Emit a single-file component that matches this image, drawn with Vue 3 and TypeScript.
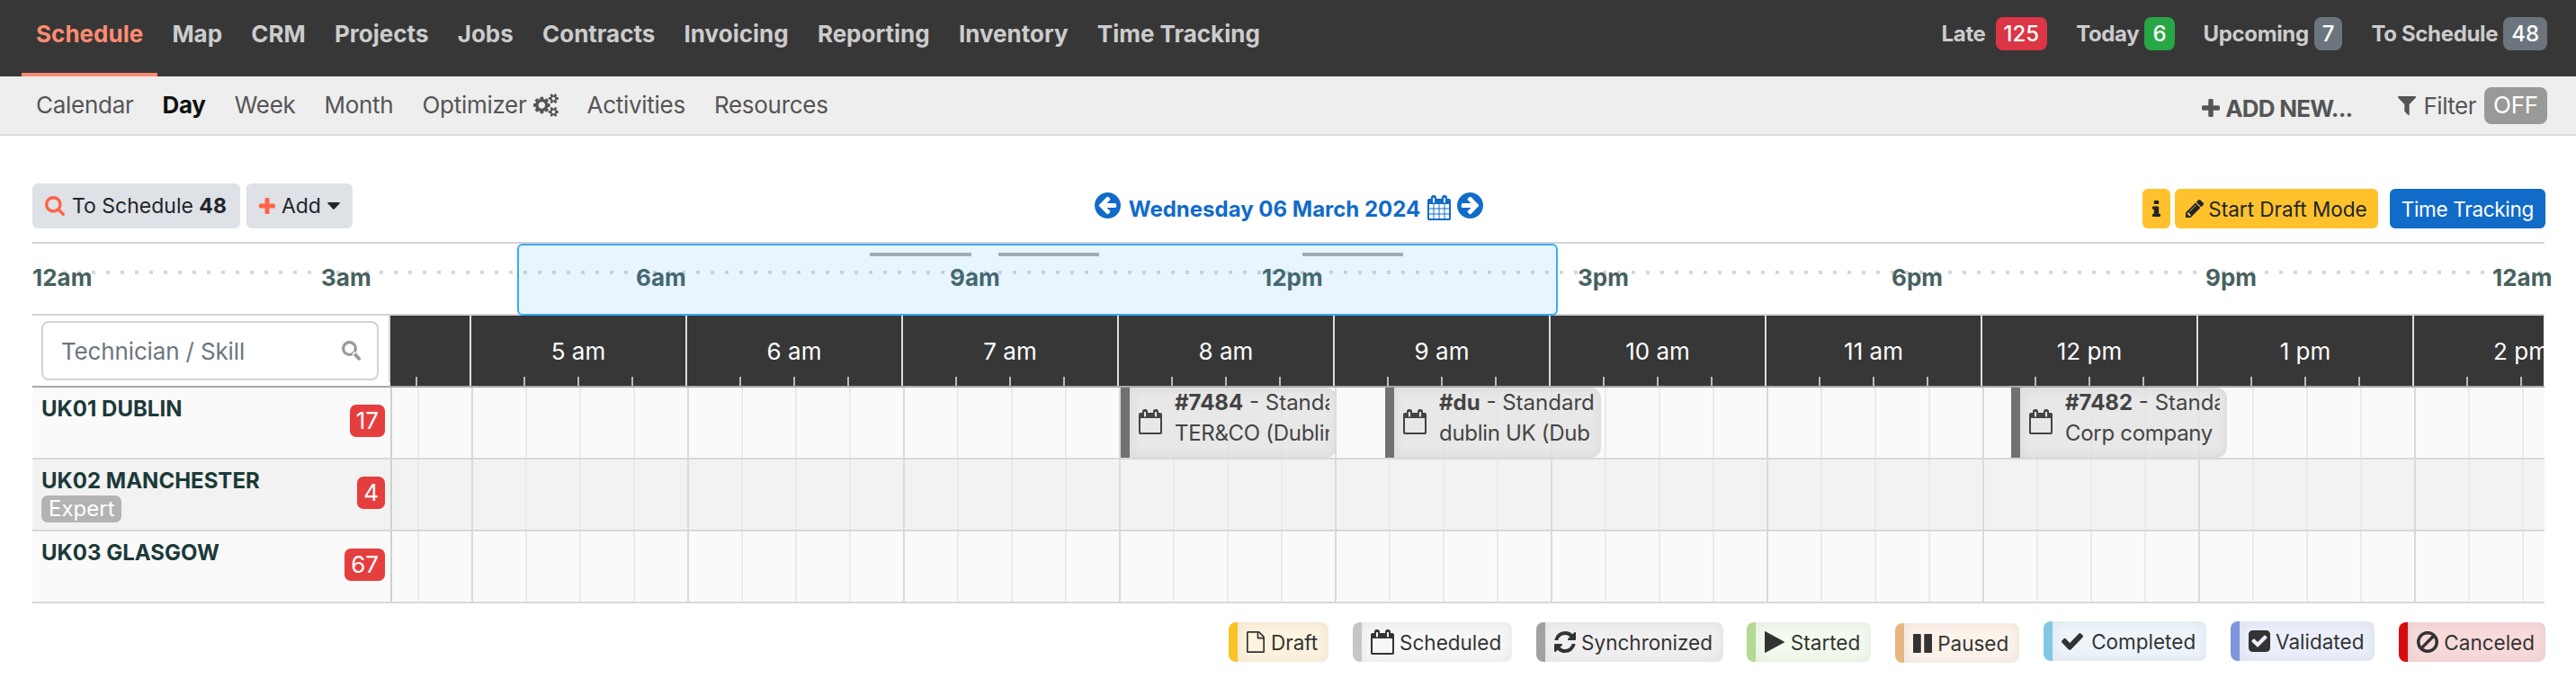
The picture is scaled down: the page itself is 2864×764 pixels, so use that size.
<script setup lang="ts">
import { h } from 'vue'
import type { FunctionalComponent } from 'vue'

interface Glyph {
  box: string
  d: string
}

const glyphs: Record<string, Glyph> = {
  search: {
    box: '64 128 1664 1664',
    d: 'M1216 832q0-185-131.5-316.5t-316.5-131.5-316.5 131.5-131.5 316.5 131.5 316.5 316.5 131.5 316.5-131.5 131.5-316.5zm512 832q0 52-38 90t-90 38q-54 0-90-38l-343-342q-179 124-399 124-143 0-273.5-55.5t-225-150-150-225-55.5-273.5 55.5-273.5 150-225 225-150 273.5-55.5 273.5 55.5 225 150 150 225 55.5 273.5q0 220-124 399l343 343q37 37 37 90z',
  },
  magnifier: {
    box: '0 0 21 22',
    d: 'M8.5 0a8.5 8.5 0 1 0 0 17a8.5 8.5 0 1 0 0-17zM8.5 3.2a5.3 5.3 0 1 1 0 10.6a5.3 5.3 0 1 1 0-10.6zM11.5 14.6L14.6 11.8L21 19.2V21L18.6 22z',
  },
  plus: {
    box: '192 128 1408 1408',
    d: 'M1600 736v192q0 40-28 68t-68 28h-416v416q0 40-28 68t-68 28h-192q-40 0-68-28t-28-68v-416h-416q-40 0-68-28t-28-68v-192q0-40 28-68t68-28h416v-416q0-40 28-68t68-28h192q40 0 68 28t28 68v416h416q40 0 68 28t28 68z',
  },
  caret: { box: '0 0 14 8', d: 'M1 0H13Q14.4 .3 13.4 1.5L7.8 7.5Q7 8.2 6.2 7.5L.6 1.5Q-.4 .3 1 0z' },
  left: {
    box: '128 128 1536 1536',
    d: 'M1408 960v-128q0-26-19-45t-45-19h-502l189-189q19-19 19-45t-19-45l-91-91q-18-18-45-18t-45 18l-362 362-91 91q-18 18-18 45t18 45l91 91 362 362q18 18 45 18t45-18l91-91q18-18 18-45t-18-45l-189-189h502q26 0 45-19t19-45zm256-64q0 209-103 385.5t-279.5 279.5-385.5 103-385.5-103-279.5-279.5-103-385.5 103-385.5 279.5-279.5 385.5-103 385.5 103 279.5 279.5 103 385.5z',
  },
  calendarO: {
    box: '64 64 1664 1792',
    d: 'M192 1728h1408v-1024h-1408v1024zm384-1152v-288q0-14-9-23t-23-9h-64q-14 0-23 9t-9 23v288q0 14 9 23t23 9h64q14 0 23-9t9-23zm768 0v-288q0-14-9-23t-23-9h-64q-14 0-23 9t-9 23v288q0 14 9 23t23 9h64q14 0 23-9t9-23zm384-128v1280q0 52-38 90t-90 38h-1408q-52 0-90-38t-38-90v-1280q0-52 38-90t90-38h128v-96q0-66 47-113t113-47h64q66 0 113 47t47 113v96h384v-96q0-66 47-113t113-47h64q66 0 113 47t47 113v96h128q52 0 90 38t38 90z',
  },
  calendar: {
    box: '64 64 1664 1792',
    d: 'M192 1728h288v-288h-288zm352 0h320v-288h-320zm-352-352h288v-320h-288zm352 0h320v-320h-320zm-352-384h288v-288h-288zm736 736h320v-288h-320zm-384-736h320v-288h-320zm768 736h288v-288h-288zm-384-352h320v-320h-320zm-352-800v-288q0-14-9-23t-23-9h-64q-14 0-23 9t-9 23v288q0 14 9 23t23 9h64q14 0 23-9t9-23zm736 800h288v-320h-288zm-384-384h320v-288h-320zm384 0h288v-288h-288zm32-416v-288q0-14-9-23t-23-9h-64q-14 0-23 9t-9 23v288q0 14 9 23t23 9h64q14 0 23-9t9-23zm384-128v1280q0 52-38 90t-90 38h-1408q-52 0-90-38t-38-90v-1280q0-52 38-90t90-38h128v-96q0-66 47-113t113-47h64q66 0 113 47t47 113v96h384v-96q0-66 47-113t113-47h64q66 0 113 47t47 113v96h128q52 0 90 38t38 90z',
  },
  filter: {
    box: '192 256 1408 1408',
    d: 'M1595 295q17 41-14 70l-493 493v742q0 42-39 59-13 5-25 5-27 0-45-19l-256-256q-19-19-19-45v-486l-493-493q-31-29-14-70 17-39 59-39h1280q42 0 59 39z',
  },
  pencil: {
    box: '128 149 1515 1515',
    d: 'M491 1536l91-91-235-235-91 91v107h128v128h107zm523-928q0-22-22-22-10 0-17 7l-542 542q-7 7-7 17 0 22 22 22 10 0 17-7l542-542q7-7 7-17zm-54-192l416 416-832 832h-416v-416zm683 96q0 53-37 90l-166 166-416-416 166-165q36-38 90-38 53 0 91 38l235 234q37 39 37 91z',
  },
  info: {
    box: '576 128 640 1408',
    d: 'M1216 1344v128q0 26-19 45t-45 19h-512q-26 0-45-19t-19-45v-128q0-26 19-45t45-19h64v-384h-64q-26 0-45-19t-19-45v-128q0-26 19-45t45-19h384q26 0 45 19t19 45v576h64q26 0 45 19t19 45zm-128-1152v192q0 26-19 45t-45 19h-256q-26 0-45-19t-19-45v-192q0-26 19-45t45-19h256q26 0 45 19t19 45z',
  },
  refresh: {
    box: '128 128 1536 1536',
    d: 'M1639 1056q0 5-1 7-64 268-268 434.5t-478 166.5q-146 0-282.5-55t-243.5-157l-129 129q-19 19-45 19t-45-19-19-45v-448q0-26 19-45t45-19h448q26 0 45 19t19 45-19 45l-137 137q71 66 161 102t187 36q134 0 250-65t186-179q11-17 53-117 8-23 30-23h192q13 0 22.5 9.5t9.5 22.5zm25-800v448q0 26-19 45t-45 19h-448q-26 0-45-19t-19-45 19-45l138-138q-148-137-349-137-134 0-250 65t-186 179q-11 17-53 117-8 23-30 23h-199q-13 0-22.5-9.5t-9.5-22.5v-7q65-268 270-434.5t480-166.5q146 0 284 55.5t245 156.5l130-129q19-19 45-19t45 19 19 45z',
  },
  play: {
    box: '192 118 1407 1556',
    d: 'M1576 927l-1328 738q-23 13-39.5 3t-16.5-36v-1472q0-26 16.5-36t39.5 3l1328 738q23 13 23 31t-23 31z',
  },
  pause: {
    box: '128 128 1536 1536',
    d: 'M1664 192v1408q0 26-19 45t-45 19h-512q-26 0-45-19t-19-45v-1408q0-26 19-45t45-19h512q26 0 45 19t19 45zm-896 0v1408q0 26-19 45t-45 19h-512q-26 0-45-19t-19-45v-1408q0-26 19-45t45-19h512q26 0 45 19t19 45z',
  },
  check: {
    box: '121 334 1550 1188',
    d: 'M1671 566q0 40-28 68l-724 724-136 136q-28 28-68 28t-68-28l-136-136-362-362q-28-28-28-68t28-68l136-136q28-28 68-28t68 28l294 295 656-657q28-28 68-28t68 28l136 136q28 28 28 68z',
  },
  checkSquare: {
    box: '128 128 1536 1536',
    d: 'M813 1299l614-614q19-19 19-45t-19-45l-102-102q-19-19-45-19t-45 19l-467 467-211-211q-19-19-45-19t-45 19l-102 102q-19 19-19 45t19 45l358 358q19 19 45 19t45-19zm851-883v960q0 119-84.5 203.5t-203.5 84.5h-960q-119 0-203.5-84.5t-84.5-203.5v-960q0-119 84.5-203.5t203.5-84.5h960q119 0 203.5 84.5t84.5 203.5z',
  },
  ban: {
    box: '128 128 1536 1536',
    d: 'M1440 893q0-161-87-295l-754 753q137 89 297 89 111 0 211.5-43.5t173.5-116.5 116-174.5 43-212.5zm-999 299l755-754q-135-91-300-91-148 0-273 73t-198 199-73 274q0 162 89 299zm1223-299q0 157-61 300t-163.5 246-245 164-298.5 61-298.5-61-245-164-163.5-246-61-300 61-299.5 163.5-245.5 245-164 298.5-61 298.5 61 245 164 163.5 245.5 61 299.5z',
  },
  file: {
    box: '128 0 1536 1792',
    d: 'M1596 380q28 28 48 76t20 88v1152q0 40-28 68t-68 28h-1344q-40 0-68-28t-28-68v-1600q0-40 28-68t68-28h896q40 0 88 20t76 48zm-444-244v376h376q-10-29-22-41l-313-313q-12-12-41-22zm384 1528v-1024h-416q-40 0-68-28t-28-68v-416h-768v1536h1280z',
  },
  cogs: {
    box: '0 0 1920 1792',
    d: 'M896 896q0-106-75-181t-181-75-181 75-75 181 75 181 181 75 181-75 75-181zm768 512q0-52-38-90t-90-38-90 38-38 90q0 53 37.5 90.5t90.5 37.5 90.5-37.5 37.5-90.5zm0-1024q0-52-38-90t-90-38-90 38-38 90q0 53 37.5 90.5t90.5 37.5 90.5-37.5 37.5-90.5zm-384 421v185q0 10-7 19.5t-16 10.5l-155 24q-11 35-32 76 34 48 90 115 7 11 7 20 0 12-7 19-23 30-82.5 89.5t-78.5 59.5q-11 0-21-7l-115-90q-37 19-77 31-11 108-23 155-7 24-30 24h-186q-11 0-20-7.5t-10-17.5l-23-153q-34-10-75-31l-118 89q-7 7-20 7-11 0-21-8-144-133-144-160 0-9 7-19 10-14 41-53t47-61q-23-44-35-82l-152-24q-10-1-17-9.5t-7-19.5v-185q0-10 7-19.5t16-10.5l155-24q11-35 32-76-34-48-90-115-7-11-7-20 0-12 7-20 22-30 82-89t79-59q11 0 21 7l115 90q34-18 77-32 11-108 23-154 7-24 30-24h186q11 0 20 7.5t10 17.5l23 153q34 10 75 31l118-89q8-7 20-7 11 0 21 8 144 133 144 160 0 8-7 19-12 16-42 54t-45 60q23 48 34 82l152 23q10 2 17 10.5t7 19.5zm640 533v140q0 16-149 31-12 27-30 52 51 113 51 138 0 4-4 7-122 71-124 71-8 0-46-47t-52-68q-20 2-30 2t-30-2q-14 21-52 68t-46 47q-2 0-124-71-4-3-4-7 0-25 51-138-18-25-30-52-149-15-149-31v-140q0-16 149-31 13-29 30-52-51-113-51-138 0-4 4-7 4-2 35-20t59-34 30-16q8 0 46 46.5t52 67.5q20-2 30-2t30 2q51-71 92-112l6-2q4 0 124 70 4 3 4 7 0 25-51 138 17 23 30 52 149 15 149 31zm0-1024v140q0 16-149 31-12 27-30 52 51 113 51 138 0 4-4 7-122 71-124 71-8 0-46-47t-52-68q-20 2-30 2t-30-2q-14 21-52 68t-46 47q-2 0-124-71-4-3-4-7 0-25 51-138-18-25-30-52-149-15-149-31v-140q0-16 149-31 13-29 30-52-51-113-51-138 0-4 4-7 4-2 35-20t59-34 30-16q8 0 46 46.5t52 67.5q20-2 30-2t30 2q51-71 92-112l6-2q4 0 124 70 4 3 4 7 0 25-51 138 17 23 30 52 149 15 149 31z',
  },
}

const Icon: FunctionalComponent<{ name: string; w: number; h: number }> = (props) =>
  h(
    'svg',
    { viewBox: glyphs[props.name].box, width: props.w, height: props.h, fill: 'currentColor', preserveAspectRatio: 'none' },
    [h('path', { d: glyphs[props.name].d, 'fill-rule': props.name === 'magnifier' ? 'evenodd' : 'nonzero' })],
  )
Icon.props = ['name', 'w', 'h']

const nav = ['Schedule', 'Map', 'CRM', 'Projects', 'Jobs', 'Contracts', 'Invoicing', 'Reporting', 'Inventory', 'Time Tracking']

const counters = [
  { label: 'Late', value: 125, tone: 'red' },
  { label: 'Today', value: 6, tone: 'green' },
  { label: 'Upcoming', value: 7, tone: 'grey' },
  { label: 'To Schedule', value: 48, tone: 'grey' },
]

const subnav = ['Calendar', 'Day', 'Week', 'Month', 'Optimizer', 'Activities', 'Resources']

// Horizontal offsets on the overview strip, in px from its left edge.
const overview = [
  { label: '12am', x: 0 },
  { label: '3am', x: 321 },
  { label: '6am', x: 671 },
  { label: '9am', x: 1020 },
  { label: '12pm', x: 1367 },
  { label: '3pm', x: 1718 },
  { label: '6pm', x: 2067 },
  { label: '9pm', x: 2416 },
  { label: '12am', x: 2735 },
]
const bars = [
  { x: 931, w: 113 },
  { x: 1074, w: 112 },
  { x: 1412, w: 112 },
]

const hours = ['5 am', '6 am', '7 am', '8 am', '9 am', '10 am', '11 am', '12 pm', '1 pm', '2 pm']

interface Job {
  x: number
  id: string
  title: string
  place: string
}
interface Row {
  name: string
  skill?: string
  count: number
  jobs: Job[]
}
const rows: Row[] = [
  {
    name: 'UK01 DUBLIN',
    count: 17,
    jobs: [
      { x: 810, id: '#7484', title: 'Standard', place: 'TER&CO (Dublin)' },
      { x: 1104, id: '#du', title: 'Standard', place: 'dublin UK (Dub' },
      { x: 1800, id: '#7482', title: 'Standard', place: 'Corp company' },
    ],
  },
  { name: 'UK02 MANCHESTER', skill: 'Expert', count: 4, jobs: [] },
  { name: 'UK03 GLASGOW', count: 67, jobs: [] },
]

const legend = [
  { label: 'Draft', icon: 'file', w: 20, h: 24, cls: 'draft' },
  { label: 'Scheduled', icon: 'calendarO', w: 26, h: 28, cls: 'scheduled' },
  { label: 'Synchronized', icon: 'refresh', w: 24, h: 24, cls: 'sync' },
  { label: 'Started', icon: 'play', w: 22, h: 24, cls: 'started' },
  { label: 'Paused', icon: 'pause', w: 21, h: 21, cls: 'paused' },
  { label: 'Completed', icon: 'check', w: 24, h: 19, cls: 'completed' },
  { label: 'Validated', icon: 'checkSquare', w: 24, h: 24, cls: 'validated' },
  { label: 'Canceled', icon: 'ban', w: 24, h: 24, cls: 'canceled' },
]
</script>

<template>
  <div class="page">
    <header class="topbar">
      <nav class="nav">
        <a v-for="(n, i) in nav" :key="n" class="nav-item" :class="{ active: i === 0 }">{{ n }}</a>
      </nav>
      <div class="counters">
        <div v-for="c in counters" :key="c.label" class="counter" :class="{ wide: c.label === 'Late' }">
          <span class="counter-label">{{ c.label }}</span><span class="badge" :class="c.tone">{{ c.value }}</span>
        </div>
      </div>
    </header>

    <div class="subbar">
      <nav class="subnav">
        <a v-for="s in subnav" :key="s" class="sub-item" :class="{ current: s === 'Day' }">
          {{ s }}<Icon v-if="s === 'Optimizer'" class="cogs" name="cogs" :w="28" :h="26" />
        </a>
      </nav>
      <div class="sub-right">
        <span class="add-new"><Icon name="plus" :w="20" :h="20" />ADD NEW...</span>
        <span class="filter"><Icon name="filter" :w="20" :h="21" /><span>Filter</span><b class="off">OFF</b></span>
      </div>
    </div>

    <div class="toolbar">
      <div class="tools-left">
        <button class="btn light sched"><Icon class="accent" name="search" :w="22" :h="22" /><span>To Schedule <b>48</b></span></button>
        <button class="btn light add"><Icon class="accent" name="plus" :w="18" :h="18" /><span>Add</span><Icon class="caret" name="caret" :w="14" :h="8" /></button>
      </div>
      <div class="date">
        <Icon class="arrow" name="left" :w="29" :h="29" />
        <span class="date-text">Wednesday 06 March 2024</span>
        <Icon class="cal" name="calendar" :w="26" :h="28" />
        <Icon class="arrow flip" name="left" :w="29" :h="29" />
      </div>
      <div class="tools-right">
        <button class="btn yellow info"><Icon name="info" :w="9" :h="18" /></button>
        <button class="btn yellow"><Icon name="pencil" :w="20" :h="20" /><span>Start Draft Mode</span></button>
        <button class="btn blue">Time Tracking</button>
      </div>
    </div>

    <section class="overview">
      <div class="dots"></div>
      <span v-for="o in overview" :key="o.x" class="ov-label" :style="{ left: o.x + 'px' }">{{ o.label }}</span>
      <div class="window"></div>
      <i v-for="b in bars" :key="b.x" class="ov-bar" :style="{ left: b.x + 'px', width: b.w + 'px' }"></i>
    </section>

    <section class="gantt">
      <div class="g-head">
        <div class="g-search">
          <div class="input"><span>Technician / Skill</span><Icon class="mag" name="magnifier" :w="21" :h="22" /></div>
        </div>
        <div class="hours">
          <div class="hour first"></div>
          <div v-for="t in hours" :key="t" class="hour">{{ t }}</div>
        </div>
      </div>
      <div v-for="(r, i) in rows" :key="r.name" class="row" :class="{ alt: i === 1 }">
        <div class="tech">
          <div class="tech-info">
            <strong>{{ r.name }}</strong>
            <span v-if="r.skill" class="skill">{{ r.skill }}</span>
          </div>
          <span class="count">{{ r.count }}</span>
        </div>
        <div class="lane">
          <article v-for="j in r.jobs" :key="j.x" class="job" :style="{ left: j.x + 'px' }">
            <Icon class="job-icon" name="calendarO" :w="26" :h="28" />
            <div class="job-text">
              <div><b>{{ j.id }}</b> - {{ j.title }}</div>
              <div class="job-place">{{ j.place }}</div>
            </div>
          </article>
        </div>
      </div>
    </section>

    <footer class="legend">
      <span v-for="l in legend" :key="l.label" class="chip" :class="l.cls">
        <Icon :name="l.icon" :w="l.w" :h="l.h" />{{ l.label }}
      </span>
    </footer>
  </div>
</template>

<style>
body {
  background: #fff;
}
</style>

<style scoped>
.page {
  width: 2864px;
  height: 764px;
  overflow: hidden;
  background: #fff;
  font-family: Inter, "Liberation Sans", sans-serif;
  font-size: 24px;
  color: #212529;
  white-space: nowrap;
}
.page * {
  box-sizing: border-box;
}
svg {
  display: block;
  flex: none;
}
.topbar {
  height: 85px;
  padding: 0 32px 0 24px;
  background: #373737;
  color: #ccc;
  display: flex;
  justify-content: space-between;
  font-weight: 700;
}
.nav {
  display: flex;
  font-size: 26px;
}
.nav-item {
  height: 85px;
  line-height: 75px;
  padding: 0 16.1px;
}
.nav-item.active {
  color: #ff8b73;
  box-shadow: inset 0 -4px #ff8b73;
}
.counters {
  display: flex;
  gap: 32px;
  height: 75px;
  align-items: center;
}
.counter {
  display: flex;
  align-items: center;
  gap: 6px;
}
.counter.wide {
  gap: 11px;
}
.counter-label {
  letter-spacing: -0.35px;
}
.badge {
  height: 37px;
  line-height: 37px;
  padding: 0 9px;
  border-radius: 8px;
  color: #fff;
  font-weight: 500;
}
.red {
  background: #dc3545;
}
.green {
  background: #28a745;
}
.grey {
  background: #6c757d;
}
.subbar {
  height: 66px;
  background: #eee;
  border-bottom: 2px solid #ddd;
  padding: 0 32px 0 40px;
  display: flex;
  justify-content: space-between;
  font-size: 26px;
  color: #555;
}
.subnav {
  display: flex;
  gap: 32px;
  line-height: 63px;
  letter-spacing: -0.28px;
}
.sub-item {
  display: flex;
}
.current {
  color: #111;
  font-weight: 700;
}
.cogs {
  margin: 19px 0 0 7px;
}
.sub-right {
  display: flex;
  gap: 51px;
  line-height: 63px;
}
.add-new {
  display: flex;
  align-items: center;
  gap: 6px;
  padding-top: 4px;
  height: 66px;
  font-weight: 700;
  letter-spacing: -0.8px;
}
.filter {
  display: flex;
  align-items: center;
  height: 64px;
  letter-spacing: -0.5px;
}
.filter svg {
  margin-right: 8px;
}
.off {
  height: 41px;
  line-height: 39px;
  margin-left: 9px;
  padding: 0 10px;
  border-radius: 8px;
  background: #999;
  color: #fff;
  font-weight: 400;
  letter-spacing: -0.2px;
}
.toolbar {
  height: 118px;
  padding: 53px 34px 0 36px;
  display: grid;
  grid-template-columns: 1fr auto 1fr;
  align-items: start;
}
.btn {
  border: 0;
  margin: 0;
  font: inherit;
  font-size: 22.5px;
  color: #212529;
  height: 44px;
  padding: 0 12px;
  border-radius: 6px;
  display: flex;
  align-items: center;
}
.tools-left,
.tools-right {
  display: flex;
}
.tools-right {
  justify-content: flex-end;
  padding-top: 6px;
}
.light {
  height: 50px;
  padding: 0 15px 0 14px;
  background: #dee1e6;
  gap: 8px;
  font-size: 23px;
}
.add {
  margin-left: 7px;
  padding-right: 14px;
  gap: 7px;
}
.accent {
  color: #ff6347;
}
.yellow {
  background: #ffc22d;
  gap: 5px;
  margin-right: 13px;
}
.yellow.info {
  margin-right: 5px;
  padding: 0 11px;
}
.blue {
  background: #116bc9;
  color: #fff;
  padding: 0 13px;
  letter-spacing: -0.3px;
}
.date {
  display: flex;
  color: #116bc9;
  font-weight: 700;
  padding-top: 10px;
}
.date-text {
  line-height: 37px;
  margin: 0 8px 0 9px;
}
.cal {
  margin: 3px 7px 0 0;
}
.flip {
  transform: scaleX(-1);
}
.overview {
  position: relative;
  height: 82px;
  margin: 0 35px 0 36px;
  border-top: 2px solid #d4d4d4;
  border-bottom: 2px solid #d4d4d4;
  color: #48615f;
  font-size: 26px;
  font-weight: 700;
}
.dots {
  position: absolute;
  left: 34px;
  right: 0;
  top: 30px;
  height: 4px;
  background: repeating-linear-gradient(90deg, #d8d8d8 0 4px, transparent 4px 16px);
}
.ov-label {
  position: absolute;
  top: 20px;
  line-height: 35px;
}
.window {
  position: absolute;
  left: 539px;
  top: 0;
  width: 1157px;
  height: 80px;
  border: 2px solid #3aacf5;
  border-radius: 6px;
  background: rgba(50, 165, 245, 0.11);
}
.ov-bar {
  position: absolute;
  top: 10px;
  height: 4px;
  background: #9fadb6;
}
.gantt {
  margin: 0 35px 0 36px;
}
.g-head {
  display: flex;
  height: 80px;
  border-bottom: 2px solid #a8a8a8;
}
.g-search {
  width: 398px;
  height: 74px;
  padding: 6px 11px 0 10px;
  border-right: 2px solid #d8d8d8;
}
.input {
  height: 66px;
  border: 2px solid #ced4da;
  border-radius: 8px;
  padding: 0 18px 0 20px;
  display: flex;
  align-items: center;
  justify-content: space-between;
  font-size: 26px;
  letter-spacing: -0.15px;
  color: #6c757d;
}
.mag {
  color: #999;
}
.hours {
  flex: 1;
  display: flex;
  overflow: hidden;
  color: #fff;
  font-size: 26px;
  margin-right: 1px;
  background:
    repeating-linear-gradient(90deg, #bbb 0 2px, transparent 2px 60px) 28px 100% / 2400px 10px no-repeat,
    #373737;
}
.hour {
  flex: none;
  width: 240px;
  border-right: 2px solid #ddd;
  text-align: center;
  line-height: 79px;
}
.hour.first {
  width: 90px;
}
.row {
  display: flex;
  height: 80px;
  background: #fafafa;
  border-bottom: 2px solid #d8d8d8;
}
.row.alt {
  background: #f2f2f2;
}
.tech {
  width: 400px;
  border-right: 2px solid #d0d0d0;
  padding: 0 6px 0 10px;
  display: flex;
  justify-content: space-between;
}
.tech-info {
  display: flex;
  flex-direction: column;
  align-items: flex-start;
}
.tech-info strong {
  line-height: 48px;
  color: #1b3a38;
}
.skill {
  margin-top: -8px;
  height: 30px;
  line-height: 29px;
  padding: 0 8px;
  border-radius: 7px;
  background: #b3b3b3;
  color: #fff;
}
.count {
  margin-top: 19px;
  height: 36px;
  line-height: 36px;
  padding: 0 7px;
  border-radius: 7px;
  background: #e53e3e;
  color: #fff;
  font-size: 26px;
}
.lane {
  flex: 1;
  position: relative;
  background:
    repeating-linear-gradient(90deg, #dadada 0 2px, transparent 2px 240px) 88px 0 / 2400px 100% no-repeat,
    repeating-linear-gradient(90deg, #eaeaea 0 2px, transparent 2px 60px) 28px 0 / 2400px 100% no-repeat;
}
.job {
  position: absolute;
  top: 0;
  width: 240px;
  height: 78px;
  border-left: 10px solid #717171;
  border-radius: 0 12px 12px 0;
  background: rgba(228, 228, 228, 0.85);
  box-shadow: inset 0 0 14px rgba(0, 0, 0, 0.07);
  display: flex;
  align-items: flex-start;
  padding: 0 8px 0 10px;
  color: #444;
}
.job-icon {
  margin-top: 24px;
}
.job-text {
  flex: 1;
  overflow: hidden;
  margin-left: 14px;
  line-height: 34px;
}
.job-place {
  letter-spacing: -0.3px;
}
.legend {
  display: flex;
  justify-content: flex-end;
  align-items: center;
  gap: 26.4px;
  padding: 20px 34px 0 0;
  font-size: 22.5px;
}
.chip {
  height: 44px;
  border-left: 10px solid;
  border-radius: 8px;
  padding: 0 12px 0 10px;
  display: flex;
  align-items: center;
  gap: 6.5px;
  color: #333;
  box-shadow: inset 0 0 16px rgba(0, 0, 0, 0.07);
}
.chip.draft {
  border-color: #f7c325;
  background: #fdf3de;
}
.chip.scheduled {
  border-color: #c6c6c6;
  background: #f7f7f7;
}
.chip.sync {
  border-color: #a1a1a1;
  background: #f0f0f0;
}
.chip.started {
  border-color: #b3d993;
  background: #f3faee;
}
.chip.paused {
  border-color: #e7b580;
  background: #fdf3eb;
}
.chip.completed {
  border-color: #81c8e6;
  background: #edf5fb;
}
.chip.validated {
  border-color: #8095dc;
  background: #ebeffb;
}
.chip.canceled {
  border-color: #d70c0c;
  background: #f8dadb;
}
.chip.paused {
  margin-top: 2px;
}
.chip.completed,
.chip.validated {
  margin-top: -2px;
}
.chip.completed svg {
  margin-right: 3px;
}
</style>
